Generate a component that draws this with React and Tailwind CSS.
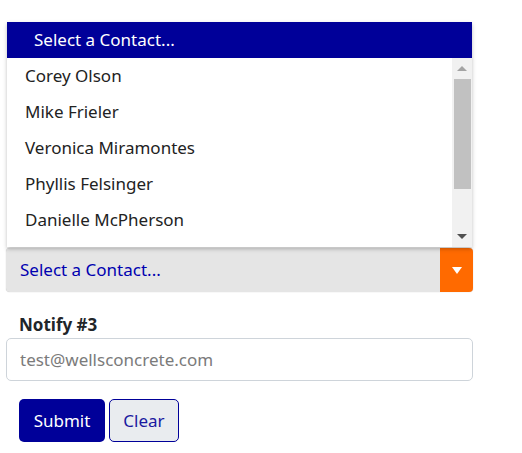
import React from "react";

const contacts = [
  "Corey Olson",
  "Mike Frieler",
  "Veronica Miramontes",
  "Phyllis Felsinger",
  "Danielle McPherson",
];

const font = { fontFamily: '"Segoe UI", "Noto Sans", "Open Sans", sans-serif' };

const ContactDropdown = () => (
  <div className="absolute left-[1px] right-[1px] bottom-full mb-[1px] bg-white shadow-[0_2px_4px_rgba(0,0,0,0.25)] z-10">
    {/* Highlighted placeholder option */}
    <div className="h-[36px] bg-[#000099] text-white text-[17px] leading-[36px] pl-[27px]">
      Select a Contact...
    </div>
    <div className="flex h-[189px]">
      <ul className="flex-1 overflow-hidden">
        {contacts.map((name) => (
          <li key={name} className="h-[36px] leading-[36px] pl-[18px] text-[17px] text-[#222]">
            {name}
          </li>
        ))}
      </ul>
      {/* Scrollbar */}
      <div className="w-[20px] bg-[#f1f1f1] flex flex-col items-center">
        <div className="h-[21px] flex items-center justify-center">
          <div className="w-0 h-0 border-l-[5px] border-r-[5px] border-b-[5px] border-l-transparent border-r-transparent border-b-[#a3a3a3]" />
        </div>
        <div className="w-[17px] h-[110px] bg-[#c1c1c1]" />
        <div className="flex-1" />
        <div className="h-[21px] flex items-center justify-center">
          <div className="w-0 h-0 border-l-[5px] border-r-[5px] border-t-[5px] border-l-transparent border-r-transparent border-t-[#505050]" />
        </div>
      </div>
    </div>
  </div>
);

export default function App() {
  return (
    <div className="w-[522px] h-[453px] bg-white overflow-hidden" style={font}>
      <div className="ml-[6px] w-[467px] pt-[248px]">
        {/* Notify #2 select (open) */}
        <div className="relative">
          <ContactDropdown />
          <div className="h-[44px] bg-[#e5e5e5] rounded-[4px] flex items-center overflow-hidden shadow-[0_0_1px_rgba(0,0,0,0.3)]">
            <span className="flex-1 pl-[14px] text-[17px] text-[#0000b0]">Select a Contact...</span>
            <div className="w-[33px] h-full bg-[#ff6a00] flex items-center justify-center">
              <div className="w-0 h-0 border-l-[5px] border-r-[5px] border-t-[7px] border-l-transparent border-r-transparent border-t-white" />
            </div>
          </div>
        </div>

        {/* Notify #3 */}
        <label className="block font-bold text-[17px] leading-[25px] mt-[20px] mb-[1px] pl-[13px] text-[#212529]">
          Notify #3
        </label>
        <input
          type="text"
          placeholder="test@wellsconcrete.com"
          className="block w-full h-[43px] border border-[#ced4da] rounded-[5px] px-[13px] text-[17px] placeholder-[#7b7b7b] outline-none"
        />

        <div className="flex gap-[4px] mt-[18px] ml-[13px]">
          <button className="w-[86px] h-[43px] bg-[#000099] text-white text-[17px] rounded-[5px]">
            Submit
          </button>
          <button className="w-[70px] h-[43px] bg-[#e9ecef] border border-[#000099] text-[#1a1aa0] text-[17px] rounded-[5px]">
            Clear
          </button>
        </div>
      </div>
    </div>
  );
}
